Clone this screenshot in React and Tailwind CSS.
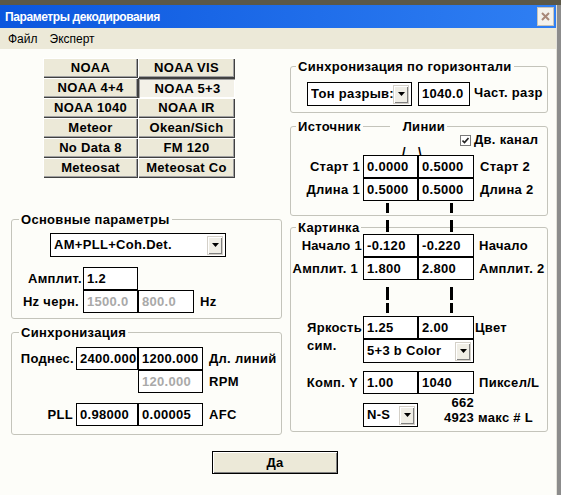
import React from "react";

const btnUp =
  "bg-[#ece9d8] shadow-[inset_1px_1px_0_#ffffff,inset_-1px_-1px_0_#404040,inset_-2px_-2px_0_#a0a0a0]";
const btnDown =
  "bg-[#f3f1e8] pt-[2px] pl-[2px] shadow-[inset_1px_1px_0_#404040,inset_2px_2px_0_#a0a0a0,inset_-1px_-1px_0_#ffffff]";

function Box({ className = "", gray = false, children }) {
  return (
    <div
      className={`h-[23px] shrink-0 border border-black bg-white pl-[3px] leading-[21px] whitespace-nowrap overflow-hidden ${
        gray ? "text-[#a9a9a9]" : ""
      } ${className}`}
    >
      {children}
    </div>
  );
}

function Arrow() {
  return (
    <div className="w-[16px] h-[19px] shrink-0 flex items-center justify-center bg-[#f0eee6] shadow-[inset_1px_1px_0_#ffffff,inset_-1px_-1px_0_#808080] border border-[#d4d0c8]">
      <svg width="7" height="4" viewBox="0 0 7 4">
        <path d="M0 0h7L3.5 4z" fill="#000" />
      </svg>
    </div>
  );
}

function Select({ className = "", children }) {
  return (
    <div
      className={`flex items-center h-[24px] shrink-0 border border-black bg-white pl-[3px] pr-[2px] ${className}`}
    >
      <span className="flex-1 overflow-hidden whitespace-nowrap">{children}</span>
      <Arrow />
    </div>
  );
}

const presets = [
  ["NOAA", "NOAA VIS"],
  ["NOAA 4+4", "NOAA 5+3"],
  ["NOAA 1040", "NOAA IR"],
  ["Meteor", "Okean/Sich"],
  ["No Data 8", "FM 120"],
  ["Meteosat", "Meteosat Co"],
];

export default function App() {
  return (
    <div className="w-[561px] h-[495px] overflow-hidden flex flex-col bg-[#fdfdf9] font-['Liberation_Sans',Arial,sans-serif] text-[13px] tracking-[0.3px] font-bold text-black">
      <div className="h-[5px] shrink-0 bg-[#5b5848]" />
      <div className="flex flex-1 min-h-0">
        <div className="flex-1 flex flex-col">
          {/* заголовок окна */}
          <div className="h-[23px] shrink-0 flex items-center justify-between pl-[5px] pr-[2px] bg-linear-to-r from-[#0b56de] to-[#2f7ff3] text-white">
            <span className="text-[12px] tracking-[-0.4px]">Параметры декодирования</span>
            <div className="w-[17px] h-[19px] flex items-center justify-center bg-[#f4f2ec] border border-[#c8c4b8]">
              <svg width="9" height="9" viewBox="0 0 9 9">
                <path d="M1 1l7 7M8 1L1 8" stroke="#a88878" strokeWidth="2" />
              </svg>
            </div>
          </div>

          {/* меню */}
          <div className="h-[21px] shrink-0 flex items-center bg-[#ece9d8] font-normal tracking-normal text-[12px] pl-[8px] gap-[12px]">
            <span>Файл</span>
            <span>Эксперт</span>
          </div>

          <div className="flex-1 flex flex-col">
            <div className="flex items-start">
              {/* левая колонка */}
              <div className="ml-[11px] w-[271px] flex flex-col">
                <div className="mt-[9px] ml-[32px] grid grid-cols-[95px_97px]">
                  {presets.map(([a, b]) => (
                    <React.Fragment key={a}>
                      <div className={`h-[20px] flex items-center justify-center ${btnUp}`}>{a}</div>
                      <div
                        className={`h-[20px] flex items-center justify-center ${
                          b === "NOAA 5+3" ? btnDown : btnUp
                        }`}
                      >
                        {b}
                      </div>
                    </React.Fragment>
                  ))}
                </div>

                <fieldset className="mt-[35px] border border-[#c4c4bb] rounded-[3px] pb-[5px]">
                  <legend className="ml-[7px] px-[2px] leading-[13px]">Основные параметры</legend>
                  <Select className="mt-[7px] ml-[38px] w-[176px]">AM+PLL+Coh.Det.</Select>
                  <div className="flex mt-[10px]">
                    <div className="w-[71px] text-right pr-[1px] leading-[23px]">Амплит.</div>
                    <Box className="w-[55px]">1.2</Box>
                  </div>
                  <div className="flex">
                    <div className="w-[71px] text-right pr-[4px] leading-[23px]">Hz черн.</div>
                    <Box className="w-[55px]" gray>
                      1500.0
                    </Box>
                    <Box className="w-[56px]" gray>
                      800.0
                    </Box>
                    <div className="ml-[6px] leading-[23px]">Hz</div>
                  </div>
                </fieldset>

                <fieldset className="mt-[7px] border border-[#c4c4bb] rounded-[3px] pb-[8px]">
                  <legend className="ml-[7px] px-[2px] leading-[13px]">Синхронизация</legend>
                  <div className="flex mt-[8px]">
                    <div className="w-[64px] text-right pr-[2px] leading-[23px]">Поднес.</div>
                    <Box className="w-[62px]">2400.000</Box>
                    <Box className="w-[65px]">1200.000</Box>
                    <div className="ml-[6px] leading-[23px]">Дл. линий</div>
                  </div>
                  <div className="flex">
                    <div className="w-[126px]" />
                    <Box className="w-[65px]" gray>
                      120.000
                    </Box>
                    <div className="ml-[6px] leading-[23px]">RPM</div>
                  </div>
                  <div className="flex mt-[10px]">
                    <div className="w-[64px] text-right pr-[3px] leading-[23px]">PLL</div>
                    <Box className="w-[62px]">0.98000</Box>
                    <Box className="w-[65px]">0.00005</Box>
                    <div className="ml-[6px] leading-[23px]">AFC</div>
                  </div>
                </fieldset>
              </div>

              {/* правая колонка */}
              <div className="relative ml-[8px] w-[258px] flex flex-col">
                <fieldset className="mt-[11px] border border-[#c4c4bb] rounded-[3px] pb-[6px]">
                  <legend className="ml-[5px] px-[2px] leading-[13px]">
                    Синхронизация по горизонтали
                  </legend>
                  <div className="flex items-start mt-[9px] ml-[16px]">
                    <Select className="w-[105px]">Тон разрыв:</Select>
                    <Box className="ml-[6px] w-[52px] h-[24px]">1040.0</Box>
                    <div className="ml-[4px] mt-[1px]">Част. разр</div>
                  </div>
                </fieldset>

                <fieldset className="mt-[7px] border border-[#c4c4bb] rounded-[3px] pb-[14px]">
                  <legend className="ml-[5px] px-[2px] leading-[13px]">
                    <span className="inline-flex items-center">
                      Источник
                      <span className="ml-[2px] w-[27px] h-px bg-[#c4c4bb]" />
                      <span className="ml-[13px]">Линии</span>
                    </span>
                  </legend>
                  <div className="flex items-center h-[12px] mt-[1px] pl-[169px]">
                    <div className="w-[11px] h-[11px] border border-[#7a7a7a] bg-white flex items-center justify-center">
                      <svg width="7" height="7" viewBox="0 0 7 7">
                        <path d="M0.5 3.5l2 2L6.5 1" stroke="#222" strokeWidth="1.6" fill="none" />
                      </svg>
                    </div>
                    <span className="ml-[3px] leading-[12px]">Дв. канал</span>
                  </div>
                  <div className="flex h-[9px] leading-[9px] pl-[111px] pt-[1px]">
                    <span>/</span>
                    <span className="ml-[12px]">\</span>
                  </div>
                  <div className="flex">
                    <div className="w-[72px] text-right pr-[3px] leading-[23px]">Старт 1</div>
                    <Box className="w-[55px]">0.0000</Box>
                    <Box className="w-[56px]">0.5000</Box>
                    <div className="ml-[6px] leading-[23px]">Старт 2</div>
                  </div>
                  <div className="flex">
                    <div className="w-[72px] text-right pr-[3px] leading-[23px]">Длина 1</div>
                    <Box className="w-[55px]">0.5000</Box>
                    <Box className="w-[56px]">0.5000</Box>
                    <div className="ml-[6px] leading-[23px]">Длина 2</div>
                  </div>
                </fieldset>

                <fieldset className="mt-[5px] border border-[#c4c4bb] rounded-[3px] pb-[4px]">
                  <legend className="ml-[5px] px-[2px] leading-[13px]">Картинка</legend>
                  <div className="flex">
                    <div className="w-[72px] text-right pr-[1px] leading-[23px]">Начало 1</div>
                    <Box className="w-[55px]">-0.120</Box>
                    <Box className="w-[56px]">-0.220</Box>
                    <div className="ml-[5px] leading-[23px]">Начало</div>
                  </div>
                  <div className="flex">
                    <div className="w-[72px] text-right pr-[5px] leading-[23px]">Амплит. 1</div>
                    <Box className="w-[55px]">1.800</Box>
                    <Box className="w-[56px]">2.800</Box>
                    <div className="ml-[5px] leading-[23px]">Амплит. 2</div>
                  </div>
                  <div className="flex mt-[36px]">
                    <div className="w-[72px] pl-[16px] leading-[23px]">Яркость</div>
                    <Box className="w-[55px]">1.25</Box>
                    <Box className="w-[56px]">2.00</Box>
                    <div className="ml-[1px] leading-[23px]">Цвет</div>
                  </div>
                  <div className="flex">
                    <div className="w-[72px] pl-[16px] leading-[14px]">сим.</div>
                    <Select className="w-[111px]">5+3 b Color</Select>
                  </div>
                  <div className="flex mt-[8px]">
                    <div className="w-[72px] text-right pr-[5px] leading-[23px]">Комп. Y</div>
                    <Box className="w-[55px]">1.00</Box>
                    <Box className="w-[56px]">1040</Box>
                    <div className="ml-[5px] leading-[23px]">Пиксел/L</div>
                  </div>
                  <div className="flex items-start">
                    <div className="w-[72px]" />
                    <Select className="mt-[9px] w-[55px] h-[23px]">N-S</Select>
                    <div className="w-[56px] text-right leading-[15px] pt-[1px]">
                      <div>662</div>
                      <div>4923</div>
                    </div>
                    <div className="ml-[4px] leading-[15px] pt-[16px]">макс # L</div>
                  </div>
                </fieldset>

                {/* связки между блоками */}
                <div className="absolute left-[96px] top-[154px] w-[3px] h-[10px] bg-black" />
                <div className="absolute left-[160px] top-[154px] w-[3px] h-[10px] bg-black" />
                <div className="absolute left-[96px] top-[171px] w-[3px] h-[12px] bg-black" />
                <div className="absolute left-[160px] top-[171px] w-[3px] h-[12px] bg-black" />
                <div className="absolute left-[96px] top-[238px] w-[3px] h-[13px] bg-black" />
                <div className="absolute left-[160px] top-[238px] w-[3px] h-[13px] bg-black" />
                <div className="absolute left-[96px] top-[254px] w-[3px] h-[10px] bg-black" />
                <div className="absolute left-[160px] top-[254px] w-[3px] h-[10px] bg-black" />
              </div>
            </div>

            <div className="mt-[16px] ml-[212px] w-[126px] h-[23px] flex items-center justify-center border border-black bg-[#ece9d8] shadow-[inset_1px_1px_0_#ffffff,inset_-1px_-1px_0_#808080]">
              Да
            </div>
          </div>
        </div>
        <div className="w-[5px] flex shrink-0">
          <div className="w-px bg-[#e4e2da]" />
          <div className="flex-1 bg-[#8c8c8c]" />
        </div>
      </div>
    </div>
  );
}
